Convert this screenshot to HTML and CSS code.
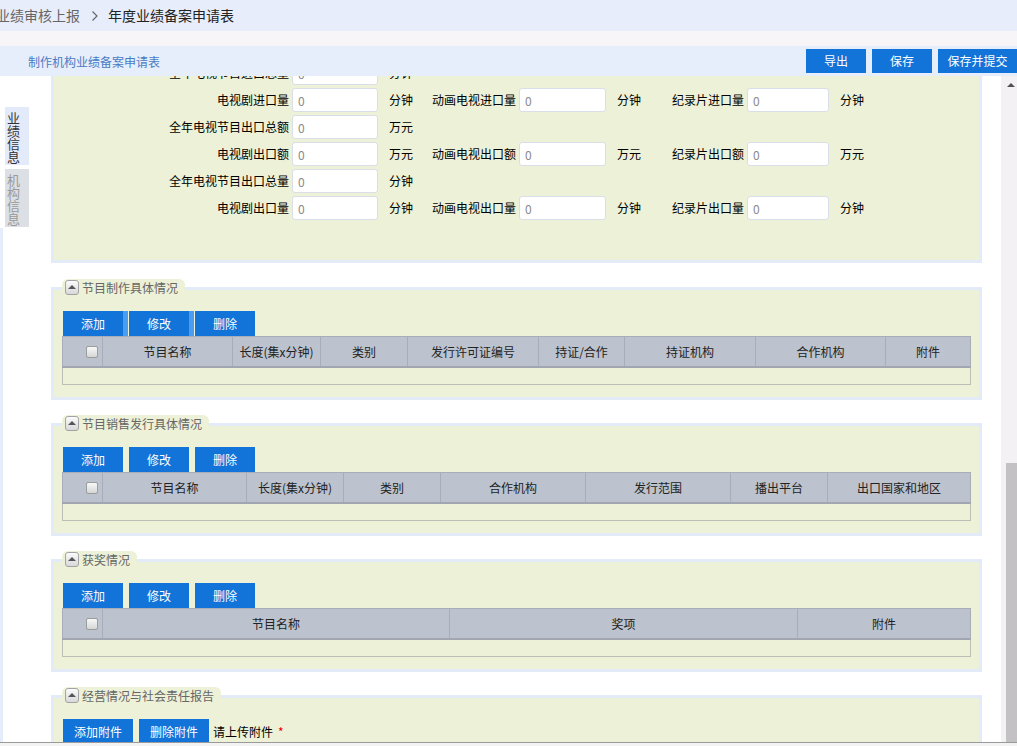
FILE: index.html
```html
<!DOCTYPE html>
<html lang="zh-CN">
<head>
<meta charset="utf-8">
<title>年度业绩备案申请表</title>
<link rel="stylesheet" href="styles.css">
</head>
<body>
<div class="crumb">
  <span class="crumb-prev">业绩审核上报</span>
  <svg class="chev" width="6" height="10" viewBox="0 0 6 10"><polyline points="0.5,0.5 5,5 0.5,9.5" fill="none" stroke="#666" stroke-width="1.2"/></svg>
  <span class="crumb-cur">年度业绩备案申请表</span>
</div>
<div class="strip"></div>
<div class="titlebar">
  <span class="title">制作机构业绩备案申请表</span>
  <div class="actions">
    <span class="btn">导出</span>
    <span class="btn">保存</span>
    <span class="btn wide">保存并提交</span>
  </div>
</div>
<div class="main">
  <div class="side">
    <div class="tab active"><span>业绩信息</span></div>
    <div class="tab"><span>机构信息</span></div>
    <div class="side-fill"></div>
  </div>
  <div class="content">
    <div class="panel form">
      <div class="row">
        <span class="lb c1">全年电视节目进口总量</span><span class="ipt w1">0</span><span class="u u1">分钟</span>
      </div>
      <div class="row">
        <span class="lb c1">电视剧进口量</span><span class="ipt w1">0</span><span class="u u1">分钟</span>
        <span class="lb c2">动画电视进口量</span><span class="ipt w2">0</span><span class="u u2">分钟</span>
        <span class="lb c3">纪录片进口量</span><span class="ipt w3">0</span><span class="u">分钟</span>
      </div>
      <div class="row">
        <span class="lb c1">全年电视节目出口总额</span><span class="ipt w1">0</span><span class="u u1">万元</span>
      </div>
      <div class="row">
        <span class="lb c1">电视剧出口额</span><span class="ipt w1">0</span><span class="u u1">万元</span>
        <span class="lb c2">动画电视出口额</span><span class="ipt w2">0</span><span class="u u2">万元</span>
        <span class="lb c3">纪录片出口额</span><span class="ipt w3">0</span><span class="u">万元</span>
      </div>
      <div class="row">
        <span class="lb c1">全年电视节目出口总量</span><span class="ipt w1">0</span><span class="u u1">分钟</span>
      </div>
      <div class="row">
        <span class="lb c1">电视剧出口量</span><span class="ipt w1">0</span><span class="u u1">分钟</span>
        <span class="lb c2">动画电视出口量</span><span class="ipt w2">0</span><span class="u u2">分钟</span>
        <span class="lb c3">纪录片出口量</span><span class="ipt w3">0</span><span class="u">分钟</span>
      </div>
    </div>

    <div class="panel sec first">
      <div class="legend"><span class="toggle"></span><span class="legend-text">节目制作具体情况</span></div>
      <div class="toolbar">
        <span class="btn hot">添加</span><span class="btn hot">修改</span><span class="btn">删除</span>
      </div>
      <div class="thead t1">
        <div class="th chk"><span class="cb"></span></div>
        <div class="th">节目名称</div>
        <div class="th">长度(集x分钟)</div>
        <div class="th">类别</div>
        <div class="th">发行许可证编号</div>
        <div class="th">持证/合作</div>
        <div class="th">持证机构</div>
        <div class="th">合作机构</div>
        <div class="th last">附件</div>
      </div>
      <div class="tbody"></div>
    </div>

    <div class="panel sec">
      <div class="legend"><span class="toggle"></span><span class="legend-text">节目销售发行具体情况</span></div>
      <div class="toolbar">
        <span class="btn">添加</span><span class="btn">修改</span><span class="btn">删除</span>
      </div>
      <div class="thead t2">
        <div class="th chk"><span class="cb"></span></div>
        <div class="th">节目名称</div>
        <div class="th">长度(集x分钟)</div>
        <div class="th">类别</div>
        <div class="th">合作机构</div>
        <div class="th">发行范围</div>
        <div class="th">播出平台</div>
        <div class="th last">出口国家和地区</div>
      </div>
      <div class="tbody"></div>
    </div>

    <div class="panel sec">
      <div class="legend"><span class="toggle"></span><span class="legend-text">获奖情况</span></div>
      <div class="toolbar">
        <span class="btn">添加</span><span class="btn">修改</span><span class="btn">删除</span>
      </div>
      <div class="thead t3">
        <div class="th chk"><span class="cb"></span></div>
        <div class="th">节目名称</div>
        <div class="th">奖项</div>
        <div class="th last">附件</div>
      </div>
      <div class="tbody"></div>
    </div>

    <div class="panel sec">
      <div class="legend"><span class="toggle"></span><span class="legend-text">经营情况与社会责任报告</span></div>
      <div class="toolbar">
        <span class="btn att">添加附件</span><span class="btn att">删除附件</span>
        <span class="upload">请上传附件</span><span class="req">*</span>
      </div>
      <div class="spacer"></div>
    </div>
  </div>
  <div class="vscroll">
    <div class="arrow"></div>
    <div class="thumb"></div>
  </div>
</div>
<div class="hbar"></div>
</body>
</html>
```

FILE: styles.css
```css
html, body {
  margin: 0;
  padding: 0;
}
body {
  width: 1017px;
  height: 746px;
  overflow: hidden;
  background: #ffffff;
  font-family: "Noto Sans CJK SC", "Liberation Sans", sans-serif;
  font-size: 12px;
  color: #111;
}

/* breadcrumb */
.crumb {
  height: 31px;
  background: #e7edfa;
  display: flex;
  align-items: center;
  font-size: 14px;
  line-height: 31px;
}
.crumb-prev {
  color: #666;
  margin-left: -4px;
}
.chev {
  margin: 0 10px 0 12px;
}
.crumb-cur {
  color: #222;
}
.strip {
  height: 15px;
  background: #f7f5f8;
}

/* title bar */
.titlebar {
  height: 30px;
  background: #e6eefb;
  display: flex;
  align-items: center;
}
.title {
  margin-left: 28px;
  color: #4a7bc4;
  font-size: 12px;
}
.actions {
  margin-left: auto;
  display: flex;
  gap: 6px;
}
.btn {
  display: inline-block;
  width: 60px;
  height: 25px;
  line-height: 25px;
  text-align: center;
  background: #1273d8;
  color: #fff;
  font-size: 12px;
}
.actions .btn {
  height: 24px;
  line-height: 24px;
}
.actions .btn.wide {
  width: 79px;
}

/* main area */
.main {
  height: 666px;
  display: flex;
  overflow: hidden;
}
.side {
  width: 51px;
  flex: none;
  display: flex;
  flex-direction: column;
  padding-top: 31px;
  box-sizing: border-box;
}
.tab {
  width: 24px;
  height: 58px;
  margin-left: 5px;
  margin-bottom: 4px;
  background: #dcdfe3;
  color: #9a9a9a;
  box-sizing: border-box;
  padding: 4px 0 0 2px;
  font-size: 13px;
}
.tab span {
  display: block;
  width: 13px;
  line-height: 13px;
}
.tab.active {
  background: #e3ebfb;
  color: #333;
}
.side-fill {
  flex: 1;
  border-left: 3px solid #e6edfa;
  margin-top: -3px;
}

.content {
  width: 950px;
  flex: none;
  overflow: hidden;
}

/* panels */
.panel {
  width: 931px;
  box-sizing: border-box;
  background: #edf1d7;
  border: 3px solid #e3eaf8;
}
.form {
  margin-top: -17px;
  border-top: 0;
  padding-bottom: 39px;
}
.row {
  height: 27px;
  display: flex;
  align-items: center;
  line-height: 17px;
}
.lb {
  text-align: right;
  color: #000;
  flex: none;
}
.c1 { width: 235px; }
.c2 { width: 96px; }
.c3 { width: 93px; }
.ipt {
  flex: none;
  margin-left: 3px;
  height: 24px;
  line-height: 24px;
  box-sizing: border-box;
  background: #fff;
  border: 1px solid #d9dee8;
  border-radius: 3px;
  color: #8a8a8a;
  padding-left: 5px;
}
.w1 { width: 86px; }
.w2 { width: 87px; }
.w3 { width: 82px; }
.u {
  flex: none;
  padding-left: 11px;
  box-sizing: border-box;
  color: #000;
}
.u1 { width: 42px; }
.u2 { width: 45px; }

.sec {
  margin-top: 23px;
  padding: 0 8px 12px 8px;
}
.sec.first {
  margin-top: 24px;
}
.legend {
  margin-top: -11px;
  height: 17px;
  width: fit-content;
  display: flex;
  align-items: center;
  background: #edf1d7;
  border-radius: 6px 6px 0 0;
  padding: 0 7px 0 3px;
}
.toggle {
  width: 14px;
  height: 15px;
  box-sizing: border-box;
  border: 1px solid #a3a3a3;
  border-radius: 3px;
  background: linear-gradient(#fbfbfb, #d8d8d8);
  display: flex;
  align-items: center;
  justify-content: center;
  margin-right: 3px;
}
.toggle::before {
  content: "";
  width: 0;
  height: 0;
  border-left: 4px solid transparent;
  border-right: 4px solid transparent;
  border-bottom: 4px solid #555;
  margin-top: -1px;
}
.legend-text {
  color: #666;
  line-height: 17px;
}
.toolbar {
  margin-top: 15px;
  padding-left: 1px;
  display: flex;
  align-items: center;
  gap: 6px;
  height: 25px;
}
.btn.hot {
  box-shadow: 5px 0 0 #4a9ef2;
}
.btn.att {
  width: 70px;
}
.upload {
  margin-left: -2px;
  color: #000;
}
.req {
  color: #e00;
  margin-left: -1px;
}
.spacer {
  height: 40px;
}

/* tables */
.thead {
  display: grid;
  height: 32px;
  box-sizing: border-box;
  background: #bcc2ce;
  border-top: 1px solid #a8adb8;
  border-bottom: 2px solid #a1a6b1;
}
.t1 { grid-template-columns: 40px 130px 88px 87px 131px 86px 131px 130px 86px; }
.t2 { grid-template-columns: 40px 144px 97px 97px 145px 145px 97px 144px; }
.t3 { grid-template-columns: 40px 347px 348px 174px; }
.th {
  border-left: 1px solid #a8adb8;
  display: flex;
  align-items: center;
  justify-content: center;
  color: #222;
  line-height: 29px;
  white-space: nowrap;
}
.th.last {
  border-right: 1px solid #a8adb8;
}
.th.chk {
  justify-content: flex-end;
  padding-right: 4px;
}
.cb {
  width: 12px;
  height: 12px;
  box-sizing: border-box;
  border: 1px solid #9c9c9c;
  border-radius: 2px;
  background: linear-gradient(#f8f8f8, #d6d6d6);
}
.tbody {
  height: 17px;
  box-sizing: border-box;
  border: 1px solid #bdbfb6;
  border-top: 0;
}

/* fake scrollbar */
.vscroll {
  width: 16px;
  flex: none;
  margin-left: auto;
  background: #f4f1f4;
  display: flex;
  flex-direction: column;
  align-items: flex-end;
}
.arrow {
  width: 0;
  height: 0;
  margin: 7px 2px 0 0;
  border-left: 4px solid transparent;
  border-right: 4px solid transparent;
  border-bottom: 4px solid #505050;
}
.thumb {
  margin-top: auto;
  width: 11px;
  height: 279px;
  background: #c3c1c4;
}
.hbar {
  height: 4px;
  box-sizing: border-box;
  border-top: 1px solid #9a9a9a;
  background: #f3f3f3;
}
```
